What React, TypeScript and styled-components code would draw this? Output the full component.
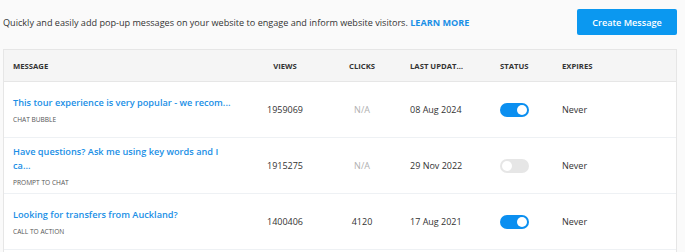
import React from "react";
import styled, { createGlobalStyle } from "styled-components";

const GlobalStyle = createGlobalStyle`
  html, body { margin: 0; padding: 0; }
  body {
    background: #fafafa;
    font-family: "Open Sans", "Liberation Sans", sans-serif;
    color: #333;
  }
`;

const Page = styled.div`
  padding: 9px 8px 0 3px;
`;

const TopBar = styled.div`
  display: flex;
  align-items: center;
  justify-content: space-between;
  height: 26px;
  margin-bottom: 14px;
`;

const Intro = styled.p`
  margin: 0;
  font-size: 9.1px;
  color: #333;
`;

const LearnMore = styled.a`
  color: #1a8fe6;
  font-weight: 700;
  text-decoration: none;
`;

const PrimaryButton = styled.button`
  width: 100px;
  height: 26px;
  border: none;
  border-radius: 2px;
  background: #0b98f0;
  color: #fff;
  font-family: inherit;
  font-size: 9.1px;
  font-weight: 600;
  cursor: pointer;
`;

const Table = styled.div`
  border: 1px solid #e6e6e6;
  background: #fff;
`;

const cols = "246px 70px 84px 90px 62px 1fr";

const HeaderRow = styled.div`
  display: grid;
  grid-template-columns: ${cols};
  height: 31px;
  align-items: center;
  background: #f5f5f5;
  border-bottom: 1px solid #e6e6e6;
`;

const HeadCell = styled.div<{ $center?: boolean; $first?: boolean }>`
  font-size: 7.7px;
  font-weight: 700;
  color: #333;
  text-transform: uppercase;
  text-align: ${(p) => (p.$center ? "center" : "left")};
  padding-left: ${(p) => (p.$center ? 0 : p.$first ? 9 : 6)}px;
`;

const Truncate = styled.span<{ $max: number }>`
  display: inline-block;
  max-width: ${(p) => p.$max}px;
  overflow: hidden;
  white-space: nowrap;
  text-overflow: ellipsis;
  vertical-align: middle;
`;

const Row = styled.div`
  display: grid;
  grid-template-columns: ${cols};
  min-height: 55px;
  align-items: center;
  border-bottom: 1px solid #eef1f4;
`;

const Cell = styled.div<{ $center?: boolean; $muted?: boolean }>`
  font-size: 9px;
  color: ${(p) => (p.$muted ? "#b0b0b0" : "#333")};
  text-align: ${(p) => (p.$center ? "center" : "left")};
  padding-left: ${(p) => (p.$center ? 0 : 6)}px;
`;

const MessageCell = styled.div`
  padding: 6px 0 6px 9px;
`;

const Title = styled.a`
  display: block;
  max-width: 221px;
  font-size: 9.2px;
  line-height: 14px;
  font-weight: 600;
  color: #1a8fe6;
  text-decoration: none;
`;

const Kind = styled.div`
  margin-top: 5px;
  font-size: 6.6px;
  line-height: 9px;
  color: #555;
  text-transform: uppercase;
`;

const Toggle = styled.span<{ $on: boolean }>`
  position: relative;
  display: inline-block;
  width: 29px;
  height: 14px;
  border-radius: 7px;
  background: ${(p) => (p.$on ? "#0b8ff0" : "#e6e6e6")};
  vertical-align: middle;

  &::after {
    content: "";
    position: absolute;
    top: 2px;
    left: ${(p) => (p.$on ? 17 : 2)}px;
    width: 10px;
    height: 10px;
    border-radius: 50%;
    background: #fff;
  }
`;

type Msg = {
  title: string;
  kind: string;
  views: string;
  clicks: string | null;
  updated: string;
  on: boolean;
  expires: string;
};

const rows: Msg[] = [
  {
    title: "This tour experience is very popular - we recom...",
    kind: "Chat Bubble",
    views: "1959069",
    clicks: null,
    updated: "08 Aug 2024",
    on: true,
    expires: "Never",
  },
  {
    title: "Have questions? Ask me using key words and I ca...",
    kind: "Prompt to chat",
    views: "1915275",
    clicks: null,
    updated: "29 Nov 2022",
    on: false,
    expires: "Never",
  },
  {
    title: "Looking for transfers from Auckland?",
    kind: "Call to action",
    views: "1400406",
    clicks: "4120",
    updated: "17 Aug 2021",
    on: true,
    expires: "Never",
  },
];

export default function App() {
  return (
    <>
      <GlobalStyle />
      <Page>
        <TopBar>
          <Intro>
            Quickly and easily add pop-up messages on your website to engage and inform website
            visitors. <LearnMore href="#">LEARN MORE</LearnMore>
          </Intro>
          <PrimaryButton>Create Message</PrimaryButton>
        </TopBar>
        <Table>
          <HeaderRow>
            <HeadCell $first>Message</HeadCell>
            <HeadCell $center>Views</HeadCell>
            <HeadCell $center>Clicks</HeadCell>
            <HeadCell>
              <Truncate $max={53}>Last Updated</Truncate>
            </HeadCell>
            <HeadCell>Status</HeadCell>
            <HeadCell>Expires</HeadCell>
          </HeaderRow>
          {rows.map((r) => (
            <Row key={r.views}>
              <MessageCell>
                <Title href="#">{r.title}</Title>
                <Kind>{r.kind}</Kind>
              </MessageCell>
              <Cell $center>{r.views}</Cell>
              <Cell $center $muted={!r.clicks}>
                {r.clicks ?? "N/A"}
              </Cell>
              <Cell>{r.updated}</Cell>
              <Cell>
                <Toggle $on={r.on} />
              </Cell>
              <Cell>{r.expires}</Cell>
            </Row>
          ))}
          <Row />
        </Table>
      </Page>
    </>
  );
}
